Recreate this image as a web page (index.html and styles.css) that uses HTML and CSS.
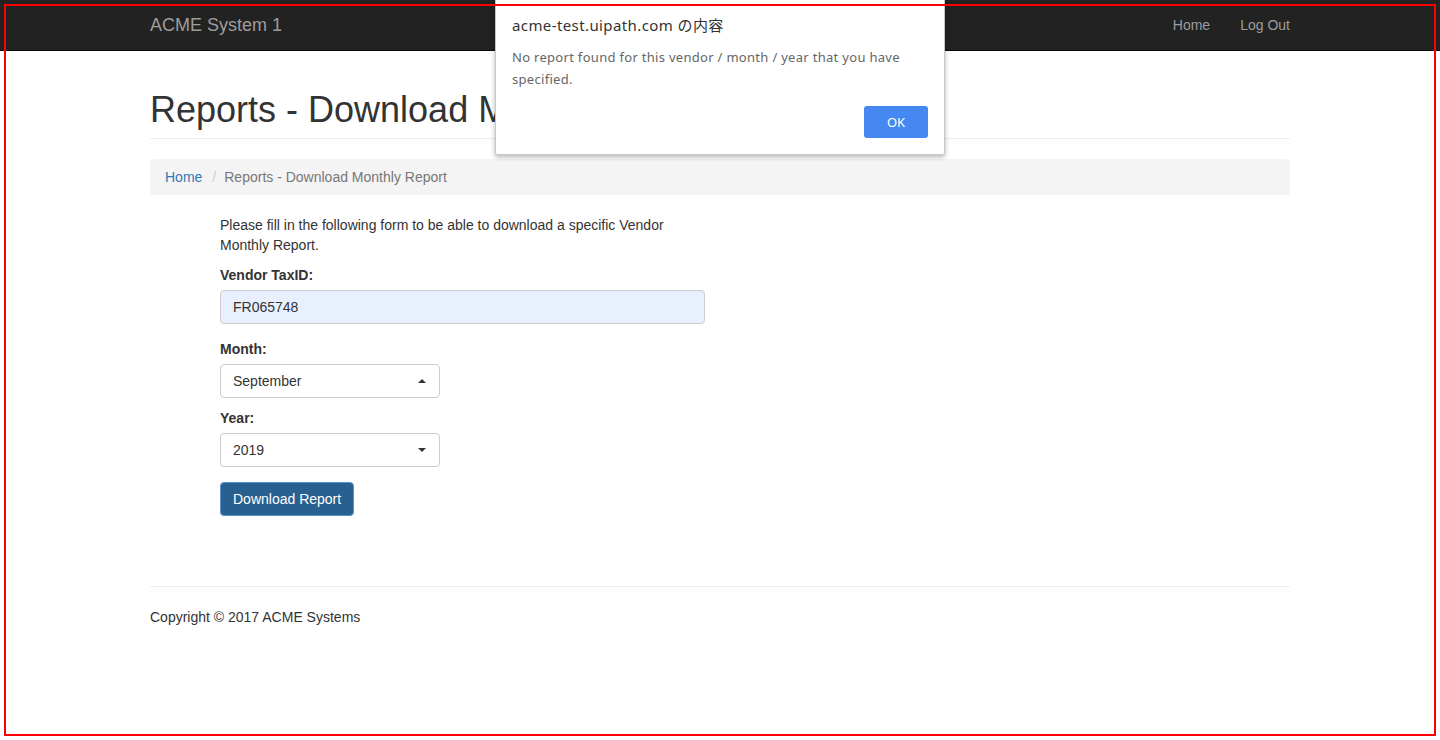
FILE: index.html
```html
<!DOCTYPE html>
<html lang="en">
<head>
<meta charset="utf-8">
<title>ACME System 1 - Reports</title>
<link rel="stylesheet" href="styles.css">
</head>
<body>
<nav class="navbar">
  <div class="nav-inner">
    <a class="brand" href="#">ACME System 1</a>
    <ul class="nav-links">
      <li><a href="#">Home</a></li>
      <li><a href="#">Log Out</a></li>
    </ul>
  </div>
</nav>

<main class="container">
  <div class="page-header">
    <h1>Reports - Download Monthly Report</h1>
  </div>
  <ol class="breadcrumb">
    <li><a href="#">Home</a></li>
    <li class="active">Reports - Download Monthly Report</li>
  </ol>

  <form class="report-form">
    <p>Please fill in the following form to be able to download a specific Vendor Monthly Report.</p>
    <div class="form-group">
      <label>Vendor TaxID:</label>
      <div class="input autofill">FR065748</div>
    </div>
    <div class="form-group tight">
      <label>Month:</label>
      <div class="input select">September<span class="caret up"></span></div>
    </div>
    <div class="form-group">
      <label>Year:</label>
      <div class="input select">2019<span class="caret"></span></div>
    </div>
    <button type="button" class="btn-primary">Download Report</button>
  </form>

  <footer class="footer">
    <p>Copyright © 2017 ACME Systems</p>
  </footer>
</main>

<div class="alert-dialog">
  <div class="alert-title">acme-test.uipath.com の内容</div>
  <div class="alert-msg">No report found for this vendor / month / year that you have specified.</div>
  <div class="alert-actions"><button type="button" class="alert-ok">OK</button></div>
</div>

<div class="frame"></div>
</body>
</html>
```
FILE: styles.css
```css
* { box-sizing: border-box; }
html, body { margin: 0; padding: 0; }
body {
  font-family: "Liberation Sans", Arial, sans-serif;
  font-size: 14px;
  line-height: 20px;
  color: #333;
  background: #fff;
  width: 1440px;
  height: 740px;
  position: relative;
  overflow: hidden;
}
a { text-decoration: none; }

.navbar {
  height: 51px;
  background: #222;
  border-bottom: 1px solid #080808;
}
.nav-inner {
  width: 1140px;
  margin: 0 auto;
  height: 50px;
  display: flex;
  align-items: center;
  justify-content: space-between;
}
.brand {
  font-size: 18px;
  line-height: 20px;
  color: #9d9d9d;
}
.nav-links {
  list-style: none;
  margin: 0 -15px 0 0;
  padding: 0;
  display: flex;
}
.nav-links a {
  display: block;
  padding: 15px;
  color: #9d9d9d;
  line-height: 20px;
}

.container {
  width: 1140px;
  margin: 0 auto;
  padding-top: 39px;
}
.page-header {
  border-bottom: 1px solid #eee;
  padding-bottom: 8px;
}
.page-header h1 {
  margin: 0;
  font-size: 36px;
  line-height: 40px;
  font-weight: 500;
  white-space: nowrap;
}
.breadcrumb {
  list-style: none;
  margin: 20px 0 0;
  padding: 8px 15px;
  background: #f4f4f4;
  border-radius: 4px;
  display: flex;
}
.breadcrumb a { color: #337ab7; }
.breadcrumb li + li::before {
  content: "/";
  color: #ccc;
  padding: 0 8px 0 10px;
}
.breadcrumb .active { color: #777; }

.report-form {
  margin: 20px 0 0 70px;
  width: 485px;
}
.report-form p { margin: 0 0 10px; }
.form-group { margin-bottom: 15px; }
.form-group.tight { margin-bottom: 10px; }
.form-group label {
  display: block;
  font-weight: bold;
  margin-bottom: 5px;
}
.input {
  height: 34px;
  padding: 6px 12px;
  border: 1px solid #ccc;
  border-radius: 4px;
  line-height: 20px;
  color: #333;
  background: #fff;
}
.input.autofill { background: #e8f0fe; }
.input.select {
  width: 220px;
  display: flex;
  align-items: center;
  justify-content: space-between;
  padding-right: 12px;
}
.caret {
  width: 0;
  height: 0;
  border-left: 4px solid transparent;
  border-right: 4px solid transparent;
  border-top: 4px solid #333;
  margin-right: 1px;
}
.caret.up {
  border-top: 0;
  border-bottom: 4px solid #333;
}
.btn-primary {
  height: 34px;
  padding: 6px 12px;
  font-family: "Liberation Sans", Arial, sans-serif;
  font-size: 14px;
  line-height: 20px;
  color: #fff;
  background: #286090;
  border: 1px solid #5b91cc;
  border-radius: 4px;
  cursor: pointer;
}

.footer {
  margin-top: 70px;
  border-top: 1px solid #eee;
  padding-top: 20px;
}
.footer p { margin: 0; }

.alert-dialog {
  position: absolute;
  left: 495px;
  top: -4px;
  width: 450px;
  height: 159px;
  background: #fff;
  border: 1px solid #c8c8c8;
  border-radius: 2px;
  box-shadow: 0 2px 5px rgba(0,0,0,.3);
  padding: 18px 16px 16px;
  font-family: "Noto Sans", "Noto Sans CJK JP", sans-serif;
}
.alert-title {
  font-size: 15px;
  line-height: 20px;
  color: #333;
  letter-spacing: 0.4px;
}
.alert-msg {
  margin-top: 11px;
  font-size: 13px;
  line-height: 22px;
  color: #666;
  letter-spacing: 0.3px;
}
.alert-actions {
  display: flex;
  justify-content: flex-end;
  margin-top: 16px;
}
.alert-ok {
  width: 64px;
  height: 32px;
  background: #4688f1;
  border: 0;
  border-radius: 3px;
  color: #fff;
  font-family: "Noto Sans", sans-serif;
  font-size: 13px;
}

.frame {
  position: absolute;
  left: 4px;
  top: 4px;
  width: 1432px;
  height: 732px;
  border: 2px solid #ff0000;
  pointer-events: none;
}
```
